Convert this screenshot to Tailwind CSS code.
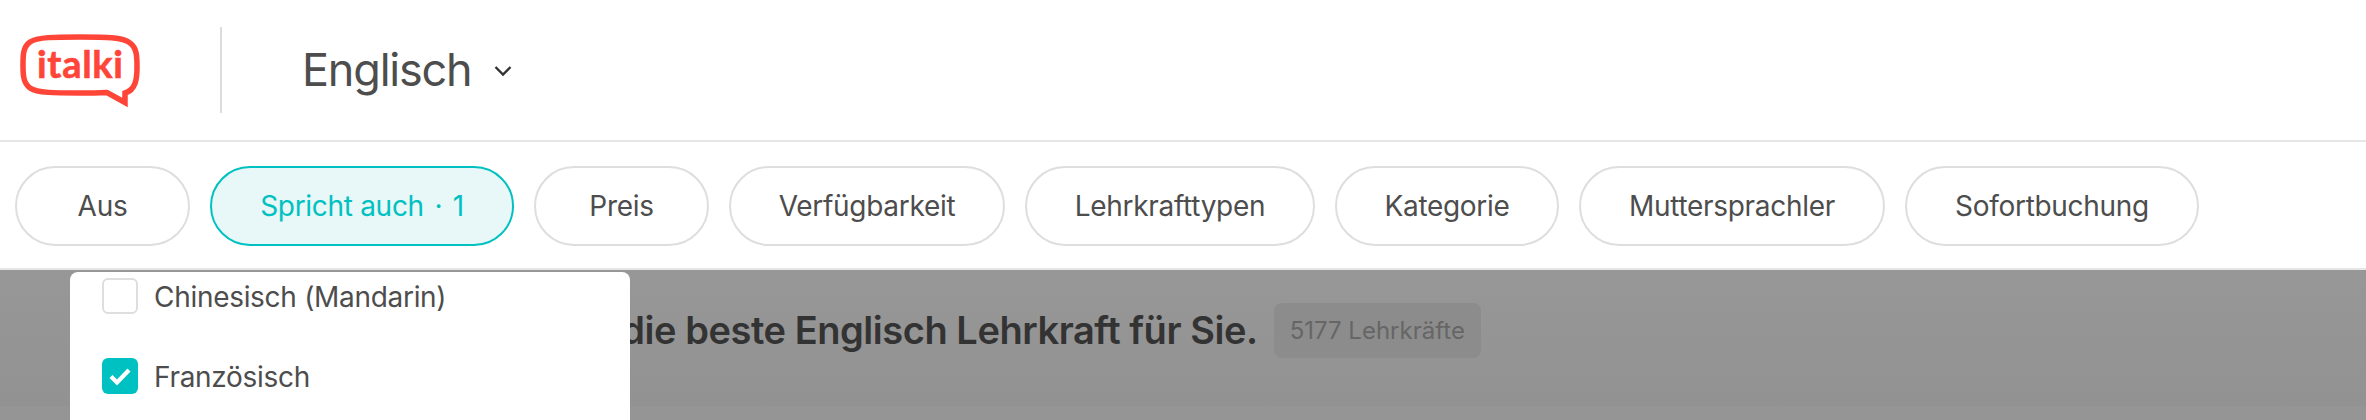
<!DOCTYPE html>
<html lang="de">
<head>
  <meta charset="UTF-8" />
  <meta name="viewport" content="width=device-width, initial-scale=1.0" />
  <title>italki Englisch Lehrkräfte</title>
  <script src="https://cdn.jsdelivr.net/npm/@tailwindcss/browser@4"></script>
</head>
<body class="relative h-[420px] overflow-hidden bg-white font-['Inter',sans-serif] text-[#4d4d4d]">

  <!-- top bar -->
  <header class="flex h-[142px] items-center border-b-2 border-[#e6e6e6]">
    <svg class="ml-[18px] h-[84px] w-[124px] shrink-0" viewBox="18 26 124 84" fill="none">
      <path d="M80 35C105 35 123 35 130 41C137 46 137 55 137 65C137 76 136 88 125 91V100.5L107 90.5C95 91 85 91 80 91C55 91 37 91 30 86C23 81 23 72 23 63C23 53 23 45 30 40C37 35 55 35 80 35Z" stroke="#ff4438" stroke-width="5.5" />
      <text x="37" y="76" textLength="86" lengthAdjust="spacing" font-family="Lato, sans-serif" font-weight="700" font-size="38" fill="#ff4438" stroke="#ff4438" stroke-width="0.6">italki</text>
    </svg>
    <div class="ml-[78px] h-[86px] w-[2px] bg-[#dcdcdc]"></div>
    <div class="ml-[80px] flex items-center">
      <span class="text-[45px] tracking-[-1.2px]">Englisch</span>
      <svg class="ml-[22px] mt-[2px] h-[12px] w-[18px]" viewBox="0 0 18 12" fill="none">
        <path d="M1.5 2l7.5 7.5L16.5 2" stroke="#333" stroke-width="2.4" />
      </svg>
    </div>
  </header>

  <!-- filters -->
  <nav class="flex h-[128px] items-center gap-[20px] border-b-2 border-[#e6e6e6] pt-[2px] pl-[15px] text-[28px] tracking-[-0.3px]">
    <button class="h-[80px] w-[175px] rounded-full border-2 border-[#dedede]">Aus</button>
    <button class="h-[80px] w-[304px] rounded-full border-2 border-[#00c1c1] bg-[#e8f7f7] text-[#00c1c1]">Spricht auch <span class="mx-[3px]">·</span> 1</button>
    <button class="h-[80px] w-[175px] rounded-full border-2 border-[#dedede]">Preis</button>
    <button class="h-[80px] w-[276px] rounded-full border-2 border-[#dedede]">Verfügbarkeit</button>
    <button class="h-[80px] w-[290px] rounded-full border-2 border-[#dedede]">Lehrkrafttypen</button>
    <button class="h-[80px] w-[224px] rounded-full border-2 border-[#dedede]">Kategorie</button>
    <button class="h-[80px] w-[306px] rounded-full border-2 border-[#dedede]">Muttersprachler</button>
    <button class="h-[80px] w-[294px] rounded-full border-2 border-[#dedede]">Sofortbuchung</button>
  </nav>

  <!-- dimmed content -->
  <main class="flex h-[150px] flex-col bg-[#959595]">
    <div class="flex h-[136px] items-start gap-[16px] bg-linear-to-b from-[#979797] to-[#929293] pt-[33px] pl-[425px]">
      <h1 class="flex h-[55px] items-center whitespace-nowrap text-[38px] font-semibold tracking-[-0.45px] text-[#333]">Finden Sie die beste Englisch Lehrkraft für Sie.</h1>
      <span class="flex h-[55px] items-center whitespace-nowrap rounded-lg bg-[#8c8c8c] px-[16px] text-[24px] text-[#666]">5177 Lehrkräfte</span>
    </div>
  </main>

  <!-- open dropdown -->
  <div class="absolute left-[70px] top-[272px] h-[160px] w-[560px] overflow-hidden rounded-t-lg bg-white pl-[32px] pt-[6px] text-[28px] tracking-[-0.3px]">
    <label class="flex h-[36px] items-center gap-[16px]">
      <span class="h-[36px] w-[36px] rounded-md border-2 border-[#dedede]"></span>
      <span class="pt-[2px]">Chinesisch (Mandarin)</span>
    </label>
    <label class="mt-[44px] flex h-[36px] items-center gap-[16px]">
      <span class="flex h-[36px] w-[36px] items-center justify-center rounded-md bg-[#00c1c1]">
        <svg class="h-[20px] w-[24px]" viewBox="0 0 24 20" fill="none"><path d="M3 10.5l6 6L21 4" stroke="#fff" stroke-width="4.2" /></svg>
      </span>
      <span class="pt-[2px]">Französisch</span>
    </label>
  </div>
</body>
</html>
